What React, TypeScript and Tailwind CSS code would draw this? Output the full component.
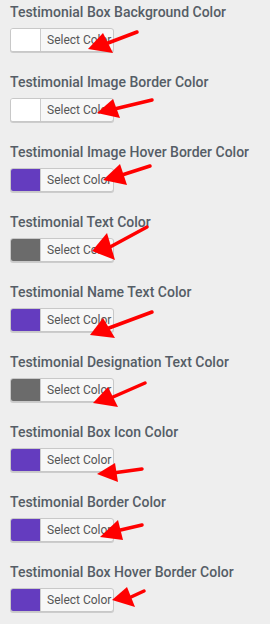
import React from "react";

const rows: { label: string; color: string }[] = [
  { label: "Testimonial Box Background Color", color: "#ffffff" },
  { label: "Testimonial Image Border Color", color: "#ffffff" },
  { label: "Testimonial Image Hover Border Color", color: "#643cbf" },
  { label: "Testimonial Text Color", color: "#6b6b6b" },
  { label: "Testimonial Name Text Color", color: "#643cbf" },
  { label: "Testimonial Designation Text Color", color: "#6b6b6b" },
  { label: "Testimonial Box Icon Color", color: "#643cbf" },
  { label: "Testimonial Border Color", color: "#643cbf" },
  { label: "Testimonial Box Hover Border Color", color: "#643cbf" },
];

type Arrow = { t: [number, number]; p: [number, number]; a: [number, number]; b: [number, number] };

const arrows: Arrow[] = [
  { t: [137, 32], p: [88, 49], a: [103, 33], b: [113, 53] },
  { t: [152, 100], p: [97, 113], a: [113, 99], b: [120, 118] },
  { t: [150, 166], p: [103, 180], a: [120, 164], b: [127, 185] },
  { t: [147, 227], p: [92, 251], a: [107, 233], b: [115, 260] },
  { t: [152, 312], p: [90, 335], a: [103, 318], b: [115, 338] },
  { t: [145, 383], p: [93, 403], a: [108, 387], b: [118, 407] },
  { t: [142, 469], p: [97, 474], a: [115, 463], b: [118, 482] },
  { t: [142, 525], p: [100, 537], a: [118, 520], b: [123, 540] },
  { t: [144, 591], p: [112, 600], a: [127, 587], b: [135, 607] },
];

export default function App() {
  return (
    <div
      className="relative w-[270px] h-[624px] bg-[#eeeeee] overflow-hidden"
      style={{ fontFamily: "Roboto, 'Noto Sans', sans-serif" }}
    >
      <div className="flex flex-col pl-[10px] pt-[2px]">
        {rows.map((r) => (
          <div key={r.label} className="flex flex-col h-[70px]">
            <div className="text-[14px] leading-[20px] font-medium text-[#555d66] whitespace-nowrap">
              {r.label}
            </div>
            <div className="mt-[6px] flex w-[104px] h-[24px] rounded-[3px] border border-[#c8c8c8] bg-[#f7f7f7] shadow-[0_1px_0_#cccccc] overflow-hidden">
              <div className="w-[30px] h-full border-r border-[#cccccc]" style={{ backgroundColor: r.color }} />
              <div className="flex-1 flex items-center pl-[6px] text-[12px] text-[#555555] whitespace-nowrap">
                Select Color
              </div>
            </div>
          </div>
        ))}
      </div>
      <svg className="absolute left-0 top-0" width="270" height="624" viewBox="0 0 270 624">
        {arrows.map((ar, i) => {
          const mx = (ar.a[0] + ar.b[0]) / 2;
          const my = (ar.a[1] + ar.b[1]) / 2;
          return (
            <g key={i}>
              <line x1={ar.t[0]} y1={ar.t[1]} x2={mx} y2={my} stroke="#ff0000" strokeWidth="3.5" strokeLinecap="round" />
              <polygon points={`${ar.p[0]},${ar.p[1]} ${ar.a[0]},${ar.a[1]} ${ar.b[0]},${ar.b[1]}`} fill="#ff0000" />
            </g>
          );
        })}
      </svg>
    </div>
  );
}
